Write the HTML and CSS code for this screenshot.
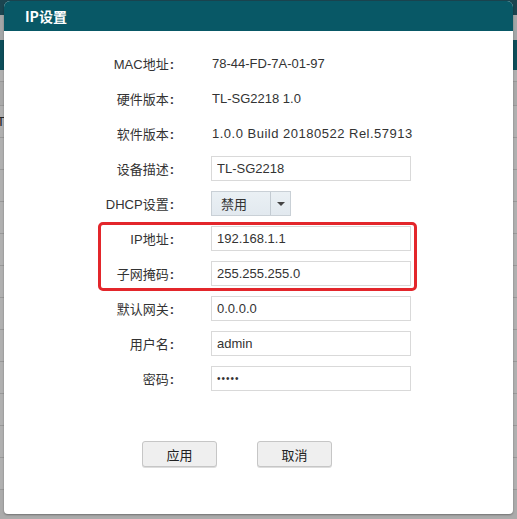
FILE: index.html
```html
<!DOCTYPE html>
<html lang="zh-CN">
<head>
<meta charset="utf-8">
<title>IP设置</title>
<link rel="stylesheet" href="styles.css">
</head>
<body>
<div class="page">
  <div class="topbar"></div>
  <div class="subbar"></div>
  <div class="band"></div>
  <div class="row row-short"></div>
  <div class="row row-mid"></div>
  <div class="row"><span class="frag">T</span></div>
  <div class="row"></div>
  <div class="row"></div>
  <div class="row"></div>
  <div class="row"></div>
  <div class="row"></div>
  <div class="row"></div>
  <div class="row"></div>
  <div class="row"></div>
  <div class="row"></div>
  <div class="row"></div>
  <div class="row"></div>
</div>

<div class="dialog">
  <div class="dlg-head">IP设置</div>
  <div class="form">
    <div class="frow"><span class="lbl">MAC地址<i>:</i></span><span class="val">78-44-FD-7A-01-97</span></div>
    <div class="frow"><span class="lbl">硬件版本<i>:</i></span><span class="val">TL-SG2218 1.0</span></div>
    <div class="frow"><span class="lbl">软件版本<i>:</i></span><span class="val val-wide">1.0.0 Build 20180522 Rel.57913</span></div>
    <div class="frow"><span class="lbl">设备描述<i>:</i></span><input class="inp" type="text" value="TL-SG2218"></div>
    <div class="frow"><span class="lbl">DHCP设置<i>:</i></span>
      <div class="select"><span class="sel-text">禁用</span><span class="sel-arrow"></span></div>
    </div>
    <div class="hl">
      <div class="frow"><span class="lbl">IP地址<i>:</i></span><input class="inp" type="text" value="192.168.1.1"></div>
      <div class="frow"><span class="lbl">子网掩码<i>:</i></span><input class="inp" type="text" value="255.255.255.0"></div>
    </div>
    <div class="frow"><span class="lbl">默认网关<i>:</i></span><input class="inp" type="text" value="0.0.0.0"></div>
    <div class="frow"><span class="lbl">用户名<i>:</i></span><input class="inp" type="text" value="admin"></div>
    <div class="frow"><span class="lbl">密码<i>:</i></span><div class="inp pwd">•••••</div></div>
  </div>
  <div class="btns">
    <button class="btn" type="button">应用</button>
    <button class="btn" type="button">取消</button>
  </div>
</div>
</body>
</html>
```

FILE: styles.css
```css
html, body {
  margin: 0;
  padding: 0;
}
body {
  width: 517px;
  height: 519px;
  overflow: hidden;
  position: relative;
  font-family: "Liberation Sans", Arial, "Noto Sans CJK SC", sans-serif;
  color: #333;
}

/* background page under the modal overlay */
.page {
  width: 517px;
  height: 519px;
  background: #ababab;
  overflow: hidden;
}
.topbar { height: 15px; background: #1b4550; }
.subbar { height: 25px; background: #a3a6a7; }
.band { height: 30px; background: #0e4e5a; }
.row {
  height: 31px;
  border-bottom: 1px solid #999;
  background: #b0b0b0;
  font-size: 13px;
  line-height: 31px;
  color: #222;
}
.row-short { height: 11px; }
.row-mid { height: 23px; background: #a9a9a9; }
.frag { margin-left: -3px; }

/* dialog */
.dialog {
  position: absolute;
  left: 4px;
  top: 1px;
  width: 509px;
  height: 513px;
  background: #fff;
  border-radius: 6px 6px 4px 4px;
  box-shadow: 0 1px 2px rgba(0, 0, 0, 0.35);
  overflow: hidden;
}
.dlg-head {
  height: 30px;
  line-height: 31px;
  background: #085866;
  color: #fff;
  font-size: 14px;
  font-weight: bold;
  padding-left: 21px;
  font-family: "Noto Sans CJK SC", "Liberation Sans", sans-serif;
}
.form {
  padding-top: 14.5px;
}
.frow {
  display: grid;
  grid-template-columns: 171px 200px;
  column-gap: 36px;
  align-items: center;
  height: 35px;
}
.lbl {
  text-align: right;
  font-size: 13px;
  color: #333;
  font-family: "Liberation Sans", Arial, "Noto Sans CJK SC", sans-serif;
}
.lbl i {
  font-style: normal;
  font-weight: bold;
  margin-left: 1px;
  margin-right: 1px;
}
.val {
  font-size: 13px;
  color: #333;
  padding-left: 1px;
  white-space: nowrap;
}
.val-wide {
  letter-spacing: 0.5px;
}
.inp {
  box-sizing: border-box;
  width: 200px;
  height: 25px;
  border: 1px solid #d9d9d9;
  padding: 0 5px;
  margin: 0;
  font-family: "Liberation Sans", Arial, sans-serif;
  font-size: 13px;
  color: #333;
  background: #fff;
  outline: none;
}
.pwd {
  display: flex;
  align-items: center;
  font-size: 10px;
  letter-spacing: 1px;
  color: #333;
}

/* select */
.select {
  box-sizing: border-box;
  width: 80px;
  height: 25px;
  border: 1px solid #c9d0d6;
  display: flex;
  background: linear-gradient(#eaf0f4, #e2e9ef);
}
.sel-text {
  flex: 1;
  font-size: 13px;
  line-height: 23px;
  padding-left: 9px;
  font-family: "Noto Sans CJK SC", sans-serif;
  color: #333;
}
.sel-arrow {
  width: 19px;
  border-left: 1px solid #c3cbd2;
  position: relative;
}
.sel-arrow::after {
  content: "";
  position: absolute;
  left: 6px;
  top: 10px;
  border-left: 4px solid transparent;
  border-right: 4px solid transparent;
  border-top: 4px solid #444;
}

/* highlight box */
.hl {
  position: relative;
}
.hl::before {
  content: "";
  position: absolute;
  left: 94px;
  top: 1.5px;
  width: 319px;
  bottom: 0;
  box-sizing: border-box;
  border: 3px solid #e3262b;
  border-radius: 5px;
  pointer-events: none;
}

/* buttons */
.btns {
  display: flex;
  gap: 40px;
  padding-left: 138px;
  margin-top: 45.5px;
}
.btn {
  box-sizing: border-box;
  width: 75px;
  height: 26px;
  margin: 0;
  padding: 0;
  background: #efefef;
  border: 1px solid #c6c6c6;
  border-radius: 3px;
  font-family: "Noto Sans CJK SC", sans-serif;
  font-size: 13px;
  color: #222;
  box-shadow: 0 1px 0 #ddd;
}
```
